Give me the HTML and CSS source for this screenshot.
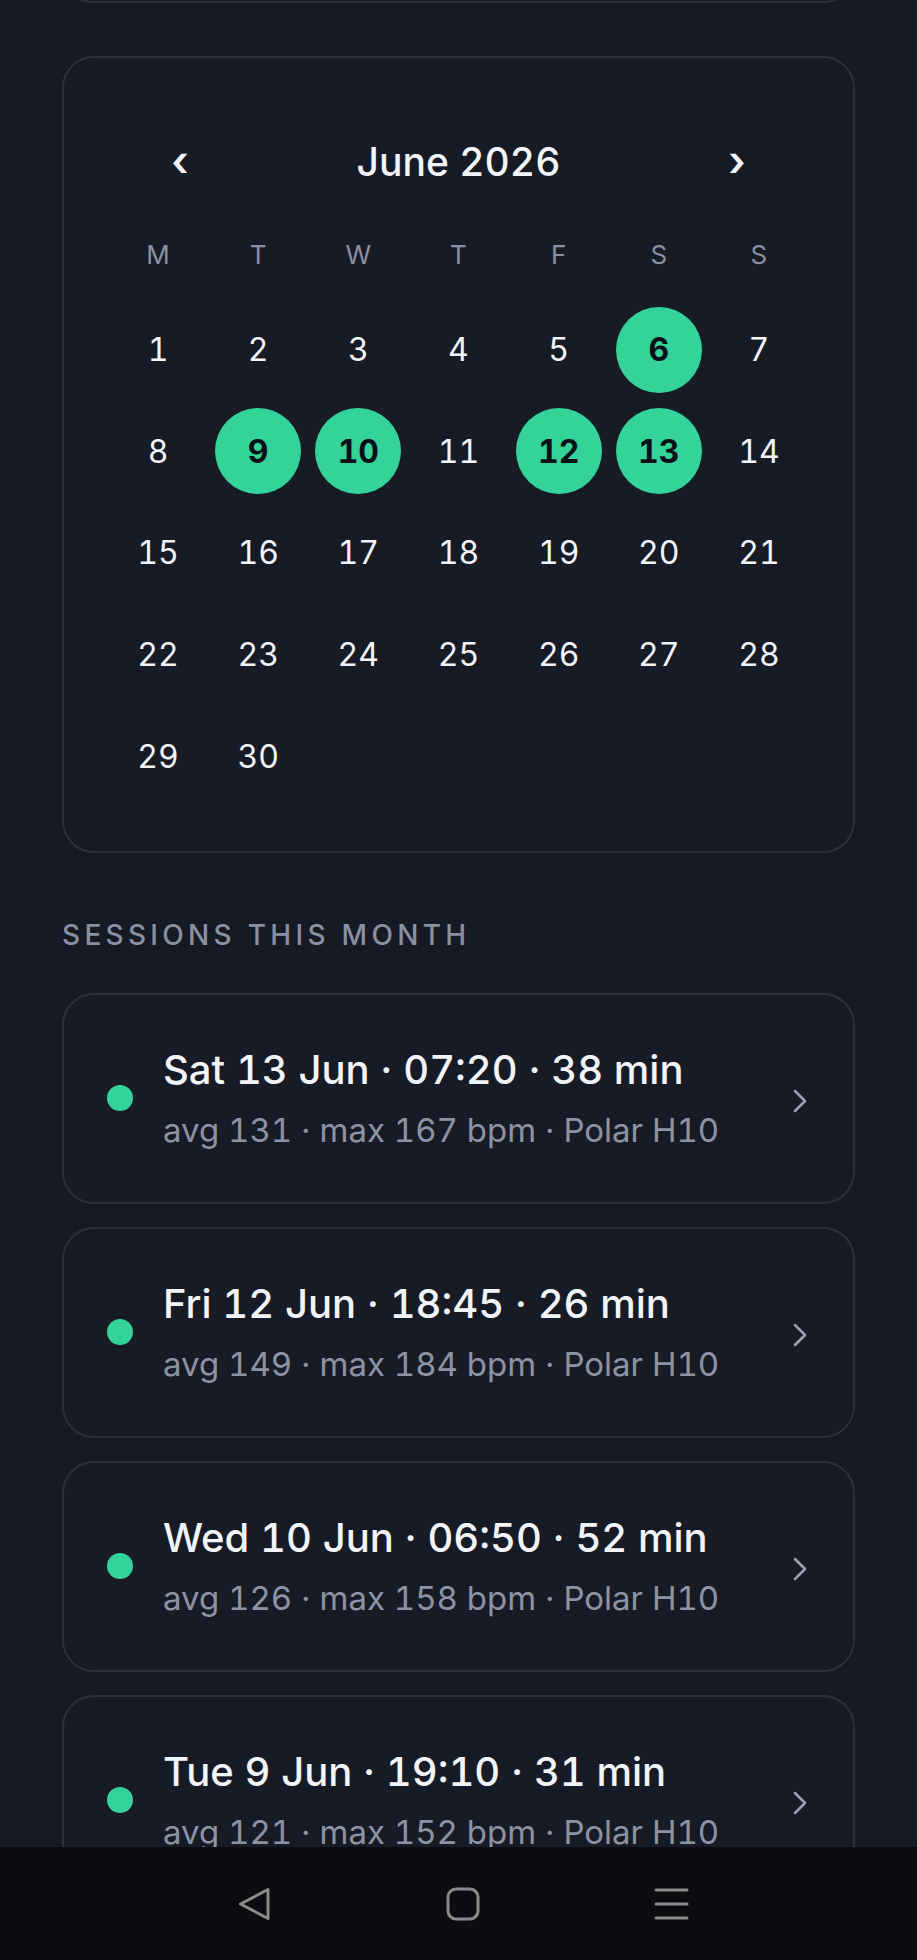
FILE: index.html
```html
<html>
<head>
  <title>Sessions</title>
  <link rel="stylesheet" href="styles.css">
</head>
<body>
  <div class="screen">
    <div class="content">
      <div class="card summary-card"></div>

      <div class="card calendar">
        <div class="cal-header">
          <button class="cal-nav">‹</button>
          <span class="cal-title">June 2026</span>
          <button class="cal-nav">›</button>
        </div>
        <div class="weekdays">
          <span>M</span><span>T</span><span>W</span><span>T</span><span>F</span><span>S</span><span>S</span>
        </div>
        <div class="days">
          <div class="day"><span>1</span></div>
          <div class="day"><span>2</span></div>
          <div class="day"><span>3</span></div>
          <div class="day"><span>4</span></div>
          <div class="day"><span>5</span></div>
          <div class="day active"><span>6</span></div>
          <div class="day"><span>7</span></div>
          <div class="day"><span>8</span></div>
          <div class="day active"><span>9</span></div>
          <div class="day active"><span>10</span></div>
          <div class="day"><span>11</span></div>
          <div class="day active"><span>12</span></div>
          <div class="day active"><span>13</span></div>
          <div class="day"><span>14</span></div>
          <div class="day"><span>15</span></div>
          <div class="day"><span>16</span></div>
          <div class="day"><span>17</span></div>
          <div class="day"><span>18</span></div>
          <div class="day"><span>19</span></div>
          <div class="day"><span>20</span></div>
          <div class="day"><span>21</span></div>
          <div class="day"><span>22</span></div>
          <div class="day"><span>23</span></div>
          <div class="day"><span>24</span></div>
          <div class="day"><span>25</span></div>
          <div class="day"><span>26</span></div>
          <div class="day"><span>27</span></div>
          <div class="day"><span>28</span></div>
          <div class="day"><span>29</span></div>
          <div class="day"><span>30</span></div>
        </div>
      </div>

      <h2 class="section-title">SESSIONS THIS MONTH</h2>

      <div class="session-list">
        <div class="card session">
          <span class="dot"></span>
          <div class="session-info">
            <div class="session-title">Sat 13 Jun · 07:20 · 38 min</div>
            <div class="session-meta">avg 131 · max 167 bpm · Polar H10</div>
          </div>
          <svg class="chevron" width="18" height="26" viewBox="0 0 18 26"><polyline points="4,3 14,13 4,23" /></svg>
        </div>
        <div class="card session">
          <span class="dot"></span>
          <div class="session-info">
            <div class="session-title">Fri 12 Jun · 18:45 · 26 min</div>
            <div class="session-meta">avg 149 · max 184 bpm · Polar H10</div>
          </div>
          <svg class="chevron" width="18" height="26" viewBox="0 0 18 26"><polyline points="4,3 14,13 4,23" /></svg>
        </div>
        <div class="card session">
          <span class="dot"></span>
          <div class="session-info">
            <div class="session-title">Wed 10 Jun · 06:50 · 52 min</div>
            <div class="session-meta">avg 126 · max 158 bpm · Polar H10</div>
          </div>
          <svg class="chevron" width="18" height="26" viewBox="0 0 18 26"><polyline points="4,3 14,13 4,23" /></svg>
        </div>
        <div class="card session">
          <span class="dot"></span>
          <div class="session-info">
            <div class="session-title">Tue 9 Jun · 19:10 · 31 min</div>
            <div class="session-meta">avg 121 · max 152 bpm · Polar H10</div>
          </div>
          <svg class="chevron" width="18" height="26" viewBox="0 0 18 26"><polyline points="4,3 14,13 4,23" /></svg>
        </div>
      </div>
    </div>

    <nav class="system-nav">
      <svg class="nav-icon" width="36" height="36" viewBox="0 0 36 36"><path d="M31 3.5 L3.5 18 L31 32.5 Z" /></svg>
      <svg class="nav-icon" width="36" height="36" viewBox="0 0 36 36"><rect x="3" y="3" width="30" height="30" rx="8" /></svg>
      <svg class="nav-icon" width="36" height="36" viewBox="0 0 36 36"><path d="M3 4 H34 M3 18 H34 M3 32 H34" /></svg>
    </nav>
  </div>
</body>
</html>
```

FILE: styles.css
```css
* {
  box-sizing: border-box;
}

body {
  margin: 0;
  background-color: #161a24;
  color: #f2f4f8;
  font-family: Inter, "Noto Sans", sans-serif;
  font-variant-numeric: tabular-nums;
}

.screen {
  height: 1960px;
  display: flex;
  flex-direction: column;
  overflow: hidden;
}

.content {
  flex: 1;
  overflow: hidden;
  padding: 0 62px;
}

.card {
  border: 2px solid #2b303c;
  border-radius: 32px;
  background-color: #171b26;
}

.summary-card {
  height: 61px;
  margin-top: -58px;
}

/* calendar */
.calendar {
  margin-top: 53px;
  padding: 75px 44px 44px;
}

.cal-header {
  display: flex;
  justify-content: space-between;
  align-items: center;
  height: 56px;
  padding: 0 48px;
}

.cal-title {
  font-size: 39px;
  font-weight: 500;
}

.cal-nav {
  width: 48px;
  height: 56px;
  padding: 0;
  border: none;
  background: none;
  color: #f2f4f8;
  font-family: inherit;
  font-size: 42px;
  font-weight: 600;
  line-height: 56px;
  cursor: pointer;
}

.weekdays {
  display: grid;
  grid-template-columns: repeat(7, 1fr);
  height: 40px;
  margin-top: 45px;
  align-items: center;
  text-align: center;
  color: #8a90a0;
  font-size: 26px;
}

.days {
  display: grid;
  grid-template-columns: repeat(7, 1fr);
  grid-auto-rows: 101.6px;
  margin-top: 25px;
}

.day {
  display: flex;
  justify-content: center;
  align-items: center;
}

.day span {
  display: flex;
  justify-content: center;
  align-items: center;
  width: 86px;
  height: 86px;
  border-radius: 50%;
  font-size: 32px;
}

.day.active span {
  background-color: #34d399;
  color: #0b0f17;
  font-weight: 700;
}

/* sessions */
.section-title {
  margin: 64px 0 0;
  font-size: 28px;
  line-height: 36px;
  font-weight: 500;
  letter-spacing: 4.3px;
  color: #8a90a0;
}

.session-list {
  display: flex;
  flex-direction: column;
  gap: 23px;
  margin-top: 40px;
}

.session {
  display: flex;
  align-items: center;
  height: 211px;
  padding: 0 44px 0 43px;
}

.dot {
  flex: none;
  width: 26px;
  height: 26px;
  border-radius: 50%;
  background-color: #34d399;
  margin-right: 30px;
}

.session-info {
  flex: 1;
}

.session-title {
  font-size: 40px;
  line-height: 50px;
  font-weight: 500;
}

.session-meta {
  margin-top: 14px;
  font-size: 33px;
  line-height: 42px;
  color: #8d93a2;
}

.chevron {
  flex: none;
  margin-top: 6px;
  fill: none;
  stroke: #9ba1ae;
  stroke-width: 2.5;
  stroke-linecap: round;
  stroke-linejoin: round;
}

/* android nav bar */
.system-nav {
  flex: none;
  height: 113px;
  display: flex;
  justify-content: center;
  align-items: center;
  gap: 172px;
  padding-left: 8px;
  background-color: #0c0d10;
}

.nav-icon {
  fill: none;
  stroke: #8b8b8b;
  stroke-width: 3;
  stroke-linecap: round;
  stroke-linejoin: round;
}
```
